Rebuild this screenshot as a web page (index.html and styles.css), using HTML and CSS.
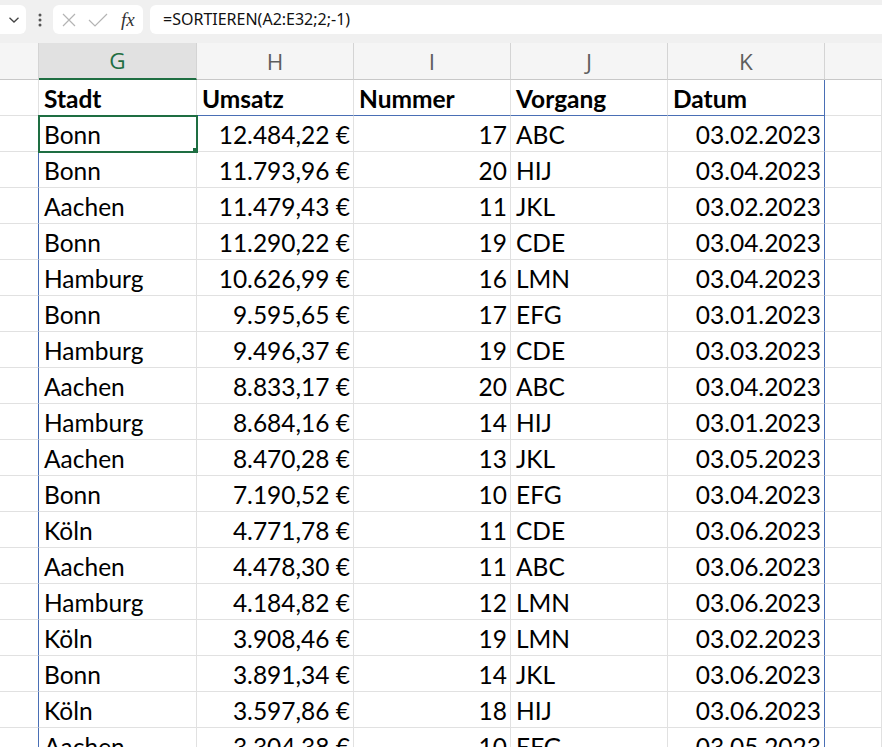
FILE: index.html
```html
<!DOCTYPE html>
<html>
<head>
    <meta charset="UTF-8">
    <title>Mappe1 - Excel</title>
    <link rel="stylesheet" href="styles.css">
</head>
<body>
    <div class="toolbar">
        <div class="name-box">
            <svg width="12" height="8" viewBox="0 0 12 8"><path d="M1.5 1.8 L6 6 L10.5 1.8" fill="none" stroke="#444" stroke-width="1.3"/></svg>
        </div>
        <div class="more">
            <svg width="4" height="14" viewBox="0 0 4 14"><circle cx="2" cy="2" r="1.5" fill="#555"/><circle cx="2" cy="7" r="1.5" fill="#555"/><circle cx="2" cy="12" r="1.5" fill="#555"/></svg>
        </div>
        <div class="fx-box">
            <svg width="14" height="14" viewBox="0 0 14 14"><path d="M1 1 L13 13 M13 1 L1 13" stroke="#b4b4b4" stroke-width="1.2"/></svg>
            <svg width="20" height="14" viewBox="0 0 20 14"><path d="M1 7 L7 13 L19 1" fill="none" stroke="#b4b4b4" stroke-width="1.2"/></svg>
            <span class="fx">fx</span>
        </div>
        <div class="formula">=SORTIEREN(A2:E32;2;-1)</div>
    </div>

    <table class="sheet">
        <colgroup>
            <col class="c-left">
            <col class="c-data">
            <col class="c-data">
            <col class="c-data">
            <col class="c-data">
            <col class="c-data">
            <col>
        </colgroup>
        <thead>
            <tr>
                <th class="corner"></th>
                <th class="selected">G</th>
                <th>H</th>
                <th>I</th>
                <th>J</th>
                <th>K</th>
                <th></th>
            </tr>
        </thead>
        <tbody>
            <tr class="titles">
                <td class="edge"></td>
                <td>Stadt</td>
                <td>Umsatz</td>
                <td>Nummer</td>
                <td>Vorgang</td>
                <td class="last">Datum</td>
                <td></td>
            </tr>
            <tr><td class="edge"></td><td class="active">Bonn</td><td class="num">12.484,22 €</td><td class="num">17</td><td>ABC</td><td class="num last">03.02.2023</td><td></td></tr>
            <tr><td class="edge"></td><td>Bonn</td><td class="num">11.793,96 €</td><td class="num">20</td><td>HIJ</td><td class="num last">03.04.2023</td><td></td></tr>
            <tr><td class="edge"></td><td>Aachen</td><td class="num">11.479,43 €</td><td class="num">11</td><td>JKL</td><td class="num last">03.02.2023</td><td></td></tr>
            <tr><td class="edge"></td><td>Bonn</td><td class="num">11.290,22 €</td><td class="num">19</td><td>CDE</td><td class="num last">03.04.2023</td><td></td></tr>
            <tr><td class="edge"></td><td>Hamburg</td><td class="num">10.626,99 €</td><td class="num">16</td><td>LMN</td><td class="num last">03.04.2023</td><td></td></tr>
            <tr><td class="edge"></td><td>Bonn</td><td class="num">9.595,65 €</td><td class="num">17</td><td>EFG</td><td class="num last">03.01.2023</td><td></td></tr>
            <tr><td class="edge"></td><td>Hamburg</td><td class="num">9.496,37 €</td><td class="num">19</td><td>CDE</td><td class="num last">03.03.2023</td><td></td></tr>
            <tr><td class="edge"></td><td>Aachen</td><td class="num">8.833,17 €</td><td class="num">20</td><td>ABC</td><td class="num last">03.04.2023</td><td></td></tr>
            <tr><td class="edge"></td><td>Hamburg</td><td class="num">8.684,16 €</td><td class="num">14</td><td>HIJ</td><td class="num last">03.01.2023</td><td></td></tr>
            <tr><td class="edge"></td><td>Aachen</td><td class="num">8.470,28 €</td><td class="num">13</td><td>JKL</td><td class="num last">03.05.2023</td><td></td></tr>
            <tr><td class="edge"></td><td>Bonn</td><td class="num">7.190,52 €</td><td class="num">10</td><td>EFG</td><td class="num last">03.04.2023</td><td></td></tr>
            <tr><td class="edge"></td><td>Köln</td><td class="num">4.771,78 €</td><td class="num">11</td><td>CDE</td><td class="num last">03.06.2023</td><td></td></tr>
            <tr><td class="edge"></td><td>Aachen</td><td class="num">4.478,30 €</td><td class="num">11</td><td>ABC</td><td class="num last">03.06.2023</td><td></td></tr>
            <tr><td class="edge"></td><td>Hamburg</td><td class="num">4.184,82 €</td><td class="num">12</td><td>LMN</td><td class="num last">03.06.2023</td><td></td></tr>
            <tr><td class="edge"></td><td>Köln</td><td class="num">3.908,46 €</td><td class="num">19</td><td>LMN</td><td class="num last">03.02.2023</td><td></td></tr>
            <tr><td class="edge"></td><td>Bonn</td><td class="num">3.891,34 €</td><td class="num">14</td><td>JKL</td><td class="num last">03.06.2023</td><td></td></tr>
            <tr><td class="edge"></td><td>Köln</td><td class="num">3.597,86 €</td><td class="num">18</td><td>HIJ</td><td class="num last">03.06.2023</td><td></td></tr>
            <tr><td class="edge"></td><td>Aachen</td><td class="num">3.304,38 €</td><td class="num">10</td><td>EFG</td><td class="num last">03.05.2023</td><td></td></tr>
        </tbody>
    </table>
</body>
</html>
```

FILE: styles.css
```css
:root {
    --toolbar-bg: #f0f0f0;
    --header-bg: #f5f5f5;
    --header-selected: #e1e1e1;
    --grid-line: #e1e1e1;
    --header-line: #d4d4d4;
    --excel-green: #1e6e42;
    --spill-blue: #4a6fb5;
}

* {
    box-sizing: border-box;
    margin: 0;
    padding: 0;
}

body {
    background: #ffffff;
    width: 882px;
    height: 747px;
    overflow: hidden;
    font-family: Lato, "Liberation Sans", sans-serif;
}

/* formula bar */

.toolbar {
    height: 43px;
    background: var(--toolbar-bg);
    display: flex;
    align-items: flex-start;
    padding-top: 5px;
}

.name-box {
    width: 26px;
    height: 29px;
    background: #fff;
    border-radius: 0 6px 6px 0;
    display: flex;
    align-items: center;
    justify-content: flex-end;
    padding-right: 6px;
}

.more {
    width: 27px;
    height: 29px;
    display: flex;
    align-items: center;
    justify-content: center;
}

.fx-box {
    width: 90px;
    height: 29px;
    background: #fff;
    border-radius: 6px;
    display: flex;
    align-items: center;
    gap: 12px;
    padding-left: 9px;
}

.fx {
    font-family: "Liberation Serif", serif;
    font-style: italic;
    font-size: 19px;
    color: #333;
    margin-left: 1px;
}

.formula {
    flex: 1;
    height: 29px;
    margin-left: 7px;
    background: #fff;
    border-radius: 6px 0 0 6px;
    font-family: "Noto Sans", sans-serif;
    font-size: 16px;
    line-height: 29px;
    padding-left: 13px;
    color: #111;
}

/* grid */

.sheet {
    width: 882px;
    table-layout: fixed;
    border-collapse: separate;
    border-spacing: 0;
}

.c-left {
    width: 39px;
}

.c-data {
    width: 157px;
}

.sheet col:nth-child(2) {
    width: 158px;
}

.sheet th {
    height: 37px;
    background: var(--header-bg);
    border-right: 1px solid var(--header-line);
    border-bottom: 1px solid #c8c8c8;
    font-family: "Open Sans", sans-serif;
    font-weight: 400;
    font-size: 22.5px;
    color: #5e5e5e;
}

.sheet th.selected {
    background: var(--header-selected);
    color: var(--excel-green);
    border-bottom: 2px solid var(--excel-green);
}

.sheet th:last-child {
    border-right: none;
}

.sheet td {
    height: 36px;
    border-right: 1px solid var(--grid-line);
    border-bottom: 1px solid var(--grid-line);
    font-size: 24.5px;
    color: #000;
    padding: 2px 3px 0 5px;
    white-space: nowrap;
    overflow: hidden;
}

.sheet td.num {
    text-align: right;
}

.titles td {
    font-weight: 700;
}

.titles td:nth-child(n+2):nth-child(-n+6) {
    border-bottom-color: var(--spill-blue);
}

.sheet td.edge {
    border-right-color: var(--spill-blue);
}

.sheet td.last {
    border-right-color: var(--spill-blue);
}

.titles td.edge {
    border-right-color: var(--grid-line);
}

.sheet td.active {
    position: relative;
    outline: 2px solid var(--excel-green);
    outline-offset: -1px;
}

.sheet td.active::after {
    content: "";
    position: absolute;
    right: -4px;
    bottom: -4px;
    width: 6px;
    height: 6px;
    background: var(--excel-green);
    border: 1px solid #fff;
}
```
